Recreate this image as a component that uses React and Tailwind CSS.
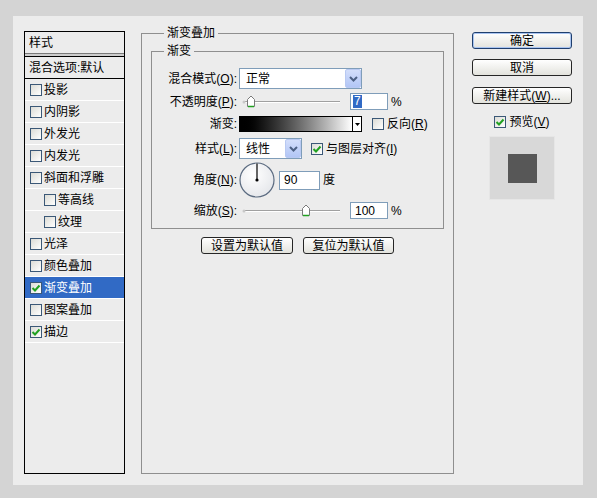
import React from "react";

const FONT = "font-['Liberation_Sans','Noto_Sans_CJK_SC',sans-serif]";

function Check({ on }) {
  return (
    <span className="w-[12px] h-[12px] shrink-0 border border-[#3b5877] bg-linear-to-br from-[#dcdcd6] to-white flex items-center justify-center">
      {on && (
        <svg width="10" height="10" viewBox="0 0 10 10">
          <path d="M1.5 5 L4 7.5 L8.5 2.5" fill="none" stroke="#21a121" strokeWidth="2" />
        </svg>
      )}
    </span>
  );
}

function Chevron() {
  return (
    <svg width="9" height="6" viewBox="0 0 9 6">
      <path d="M1 1 L4.5 4.5 L8 1" fill="none" stroke="#4d6185" strokeWidth="2" />
    </svg>
  );
}

function Select({ value, width }) {
  return (
    <div className={`${width} h-[21px] border border-[#7f9db9] bg-white flex items-center`}>
      <span className="flex-1 pl-[6px] text-[12px]">{value}</span>
      <span className="w-[16px] h-[19px] rounded-[2px] border border-[#b8c9f2] bg-linear-to-b from-[#d3defb] to-[#b2c6f6] flex items-center justify-center">
        <Chevron />
      </span>
    </div>
  );
}

function Thumb() {
  return (
    <svg width="10" height="12" viewBox="0 0 10 12">
      <path d="M1.5 4.5 L5 1 L8.5 4.5 L8.5 10.5 L1.5 10.5 Z" fill="white" stroke="#7a7a7a" />
      <path d="M2 10.5 L8 10.5" stroke="#21a121" strokeWidth="1.5" />
    </svg>
  );
}

function Slider({ pos }) {
  // pos = x of the thumb inside a 108px track
  return (
    <svg width="108" height="17" viewBox="0 0 108 17">
      <path d="M5.5 8.5 L101 8.5" stroke="#a0a0a0" />
      <path d="M5.5 9.5 L101 9.5" stroke="#ffffff" />
      <circle cx="5" cy="9" r="1.5" fill="#c8c8c8" />
      <g transform={`translate(${pos} 2)`}>
        <path d="M1.5 4.5 L5 1 L8.5 4.5 L8.5 11.5 L1.5 11.5 Z" fill="white" stroke="#7a7a7a" />
        <path d="M2 11.5 L8 11.5" stroke="#21a121" strokeWidth="1.5" />
      </g>
    </svg>
  );
}

function Field({ children, w, h = "h-[17px]" }) {
  return (
    <div className={`${w} ${h} border border-[#7f9db9] bg-white flex items-center pl-[4px] text-[12px]`}>
      {children}
    </div>
  );
}

function Btn({ children, w, def }) {
  return (
    <div
      className={`${w} h-[17px] rounded-[3px] border ${
        def ? "border-[#1f3f6e] shadow-[inset_0_0_0_1px_#a9c4f0]" : "border-[#262626]"
      } bg-linear-to-b from-white to-[#e3e3dd] flex items-center justify-center text-[12px] leading-none`}
    >
      {children}
    </div>
  );
}

const items = [
  { t: "投影" },
  { t: "内阴影" },
  { t: "外发光" },
  { t: "内发光" },
  { t: "斜面和浮雕" },
  { t: "等高线", indent: true },
  { t: "纹理", indent: true },
  { t: "光泽" },
  { t: "颜色叠加" },
  { t: "渐变叠加", on: true, sel: true },
  { t: "图案叠加" },
  { t: "描边", on: true },
];

function StyleList() {
  return (
    <div className="mt-[5px] w-[101px] h-[443px] border border-black flex flex-col text-[12px]">
      <div className="h-[22px] border-b border-[#7a7a7a] pl-[4px] flex items-center">样式</div>
      <div className="h-[2px] bg-[#cdcdcd]" />
      <div className="h-[23px] border-t border-b border-black pl-[4px] flex items-center">混合选项:默认</div>
      {items.map((it, i) => (
        <div
          key={i}
          className={`h-[22px] border-b border-white flex items-center gap-[2px] ${
            it.indent ? "pl-[19px]" : "pl-[5px]"
          } ${it.sel ? "bg-[#316ac5] text-white" : ""}`}
        >
          <Check on={it.on} />
          <span>{it.t}</span>
        </div>
      ))}
    </div>
  );
}

function Label({ children }) {
  return <div className="w-[85px] mr-[2px] text-right text-[12px] whitespace-nowrap">{children}</div>;
}

function GradientPanel() {
  return (
    <div className="ml-[16px] flex flex-col">
      <fieldset className="w-[313px] h-[448px] border border-[#8f8f8f] px-[9px] pt-[4px] m-0">
        <legend className="ml-[13px] px-[3px] text-[12px] leading-[14px]">渐变叠加</legend>
        <fieldset className="w-[293px] h-[185px] border border-[#8f8f8f] m-0 p-0 pt-[10px]">
          <legend className="ml-[12px] px-[3px] text-[12px] leading-[14px]">渐变</legend>
          <div className="flex items-center h-[21px]">
            <Label>混合模式(<u>O</u>):</Label>
            <Select value="正常" width="w-[123px]" />
          </div>
          <div className="flex items-center h-[17px] mt-[4px]">
            <Label>不透明度(<u>P</u>):</Label>
            <Slider pos={7} />
            <div className="ml-[3px] w-[38px] h-[17px] border border-[#7f9db9] bg-white flex items-center pl-[2px]">
              <span className="bg-[#316ac5] text-white text-[12px] leading-[13px] px-[1px]">7</span>
            </div>
            <span className="ml-[3px] text-[12px]">%</span>
          </div>
          <div className="flex items-center h-[16px] mt-[6px]">
            <Label>渐变:</Label>
            <div className="w-[123px] h-[16px] border border-black flex">
              <div className="flex-1 bg-linear-to-r from-black to-white" />
              <div className="w-[9px] bg-white border-l border-black flex items-center justify-center">
                <svg width="5" height="3" viewBox="0 0 5 3">
                  <path d="M0 0 L5 0 L2.5 3 Z" fill="black" />
                </svg>
              </div>
            </div>
            <div className="ml-[10px] flex items-center gap-[3px] text-[12px]">
              <Check />
              <span>反向(<u>R</u>)</span>
            </div>
          </div>
          <div className="flex items-center h-[21px] mt-[6px]">
            <Label>样式(<u>L</u>):</Label>
            <Select value="线性" width="w-[63px]" />
            <div className="ml-[9px] flex items-center gap-[3px] text-[12px]">
              <Check on />
              <span>与图层对齐(<u>I</u>)</span>
            </div>
          </div>
          <div className="flex items-center h-[36px] mt-[3px]">
            <Label>角度(<u>N</u>):</Label>
            <svg width="36" height="36" viewBox="0 0 36 36">
              <defs>
                <radialGradient id="dial" cx="0.4" cy="0.35" r="0.7">
                  <stop offset="0" stopColor="#ffffff" />
                  <stop offset="1" stopColor="#e4e6ea" />
                </radialGradient>
              </defs>
              <circle cx="18" cy="18" r="17" fill="url(#dial)" stroke="#5b6b80" strokeWidth="1.2" />
              <path d="M18 18 L18 1.5" stroke="black" strokeWidth="1.2" />
              <circle cx="18" cy="18" r="1.6" fill="black" />
            </svg>
            <div className="ml-[4px]">
              <Field w="w-[41px]" h="h-[19px]">90</Field>
            </div>
            <span className="ml-[3px] text-[12px]">度</span>
          </div>
          <div className="flex items-center h-[17px] mt-[4px]">
            <Label>缩放(<u>S</u>):</Label>
            <Slider pos={62} />
            <div className="ml-[3px]">
              <Field w="w-[38px]">100</Field>
            </div>
            <span className="ml-[3px] text-[12px]">%</span>
          </div>
        </fieldset>
        <div className="mt-[8px] flex justify-center gap-[10px]">
          <Btn w="w-[92px]">设置为默认值</Btn>
          <Btn w="w-[91px]">复位为默认值</Btn>
        </div>
      </fieldset>
    </div>
  );
}

function Actions() {
  return (
    <div className="ml-[18px] mt-[6px] w-[100px] flex flex-col items-center">
      <Btn w="w-[100px]" def>确定</Btn>
      <div className="mt-[10px]">
        <Btn w="w-[100px]">取消</Btn>
      </div>
      <div className="mt-[11px]">
        <Btn w="w-[100px]">新建样式(<u>W</u>)...</Btn>
      </div>
      <div className="mt-[11px] h-[14px] flex items-center gap-[3px] text-[12px]">
        <Check on />
        <span>预览(<u>V</u>)</span>
      </div>
      <div className="mt-[7px] w-[66px] h-[64px] bg-[#d8d8d8] border border-[#e6e6e6] flex items-center justify-center">
        <div className="w-[29px] h-[29px] bg-[#575757]" />
      </div>
    </div>
  );
}

export default function App() {
  return (
    <div className={`w-[597px] h-[498px] bg-[#d4d4d4] pt-[16px] pl-[13px] text-black ${FONT}`}>
      <div className="w-[570px] h-[469px] bg-[#ececec] flex items-start pl-[11px] pt-[10px]">
        <StyleList />
        <GradientPanel />
        <Actions />
      </div>
    </div>
  );
}
